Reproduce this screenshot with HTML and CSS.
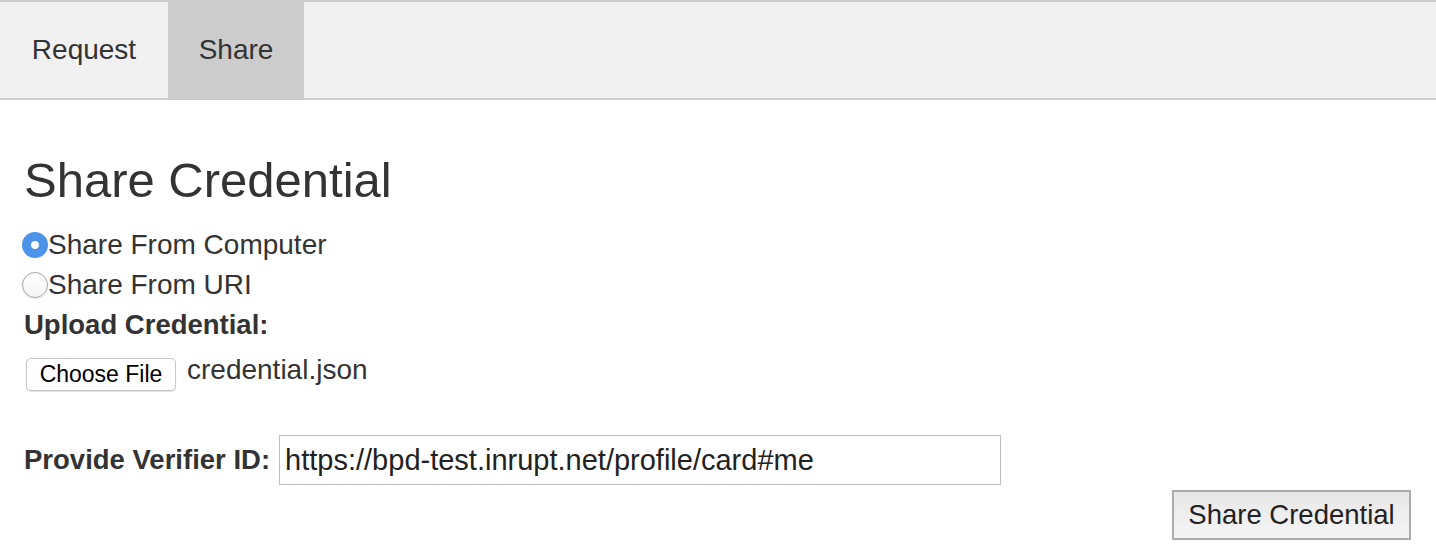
FILE: index.html
```html
<!DOCTYPE html>
<html lang="en">
<head>
<meta charset="utf-8">
<title>Share Credential</title>
<link rel="stylesheet" href="styles.css">
</head>
<body>
<nav class="tabs">
  <a class="tab tab-request">Request</a>
  <a class="tab tab-share tab-active">Share</a>
</nav>
<main class="content">
  <h1 class="title">Share Credential</h1>
  <div class="options">
    <label class="radio-row"><input class="radio" type="radio" name="src" checked><span>Share From Computer</span></label>
    <label class="radio-row"><input class="radio" type="radio" name="src"><span>Share From URI</span></label>
    <div class="field-label">Upload Credential:</div>
  </div>
  <div class="upload-row">
    <button class="file-btn" type="button">Choose File</button>
    <span class="file-name">credential.json</span>
  </div>
  <div class="verifier-row">
    <label class="field-label verifier-label">Provide Verifier ID:</label>
    <input class="verifier-input" type="text" value="https://bpd-test.inrupt.net/profile/card#me">
  </div>
  <div class="actions">
    <button class="share-btn" type="button">Share Credential</button>
  </div>
</main>
</body>
</html>
```

FILE: styles.css
```css
html, body {
  margin: 0;
  padding: 0;
  background: #fff;
}
body {
  font-family: "Liberation Sans", Arial, Helvetica, sans-serif;
  color: #333;
  font-size: 28px;
}
.tabs {
  display: flex;
  background: #f1f1f1;
  border-top: 2px solid #cdcdcd;
  border-bottom: 2px solid #cdcdcd;
  height: 96px;
}
.tab {
  display: block;
  text-align: center;
  line-height: 96px;
  font-size: 28px;
  color: #333;
}
.tab-request {
  width: 168px;
}
.tab-share {
  width: 136px;
}
.tab-active {
  background: #cccccc;
}
.content {
  padding: 0 25px 0 24px;
}
.title {
  margin: 52px 0 0;
  font-size: 49px;
  font-weight: normal;
  line-height: 56px;
  color: #333;
}
.options {
  margin-top: 17px;
  display: flex;
  flex-direction: column;
}
.radio-row {
  display: flex;
  align-items: center;
  height: 40px;
  line-height: 40px;
}
.radio {
  -webkit-appearance: none;
  appearance: none;
  width: 26px;
  height: 26px;
  margin: 0 0 0 -2px;
  border-radius: 50%;
  border: 1px solid #a8a8a8;
  background: linear-gradient(#ffffff, #f3f3f3);
  box-shadow: 0 1px 1px rgba(0,0,0,0.10);
  box-sizing: border-box;
  flex: none;
}
.radio:checked {
  border: none;
  background: radial-gradient(circle, #ffffff 0, #ffffff 3.5px, #4d93ea 4.5px);
  box-shadow: none;
}
.field-label {
  font-weight: bold;
  line-height: 40px;
  font-size: 27.5px;
}
.upload-row {
  display: flex;
  align-items: flex-start;
  margin-top: 13px;
}
.file-btn {
  font-family: "Liberation Sans", Arial, Helvetica, sans-serif;
  font-size: 23px;
  color: #000;
  background: #fff;
  border: 1px solid #c6c6c6;
  border-radius: 5px;
  box-shadow: 0 1px 1px rgba(0,0,0,0.12);
  height: 33px;
  width: 150px;
  padding: 0;
  margin-left: 2px;
}
.file-name {
  margin-left: 11px;
  margin-top: -4px;
  line-height: 32px;
}
.verifier-row {
  display: flex;
  align-items: center;
  margin-top: 44px;
}
.verifier-label {
  line-height: 32px;
  margin-right: 9px;
}
.verifier-input {
  width: 722px;
  height: 50px;
  box-sizing: border-box;
  border: 1px solid #bdbdbd;
  padding: 0 5px;
  font-family: "Liberation Sans", Arial, Helvetica, sans-serif;
  font-size: 29px;
  color: #222;
  outline: none;
}
.actions {
  display: flex;
  justify-content: flex-end;
  margin-top: 5px;
}
.share-btn {
  width: 239px;
  height: 50px;
  box-sizing: border-box;
  border: 2px solid #ababab;
  background: linear-gradient(#e7e7e7, #f5f5f5);
  font-family: "Liberation Sans", Arial, Helvetica, sans-serif;
  font-size: 27.5px;
  color: #222;
  padding: 0;
}
```
